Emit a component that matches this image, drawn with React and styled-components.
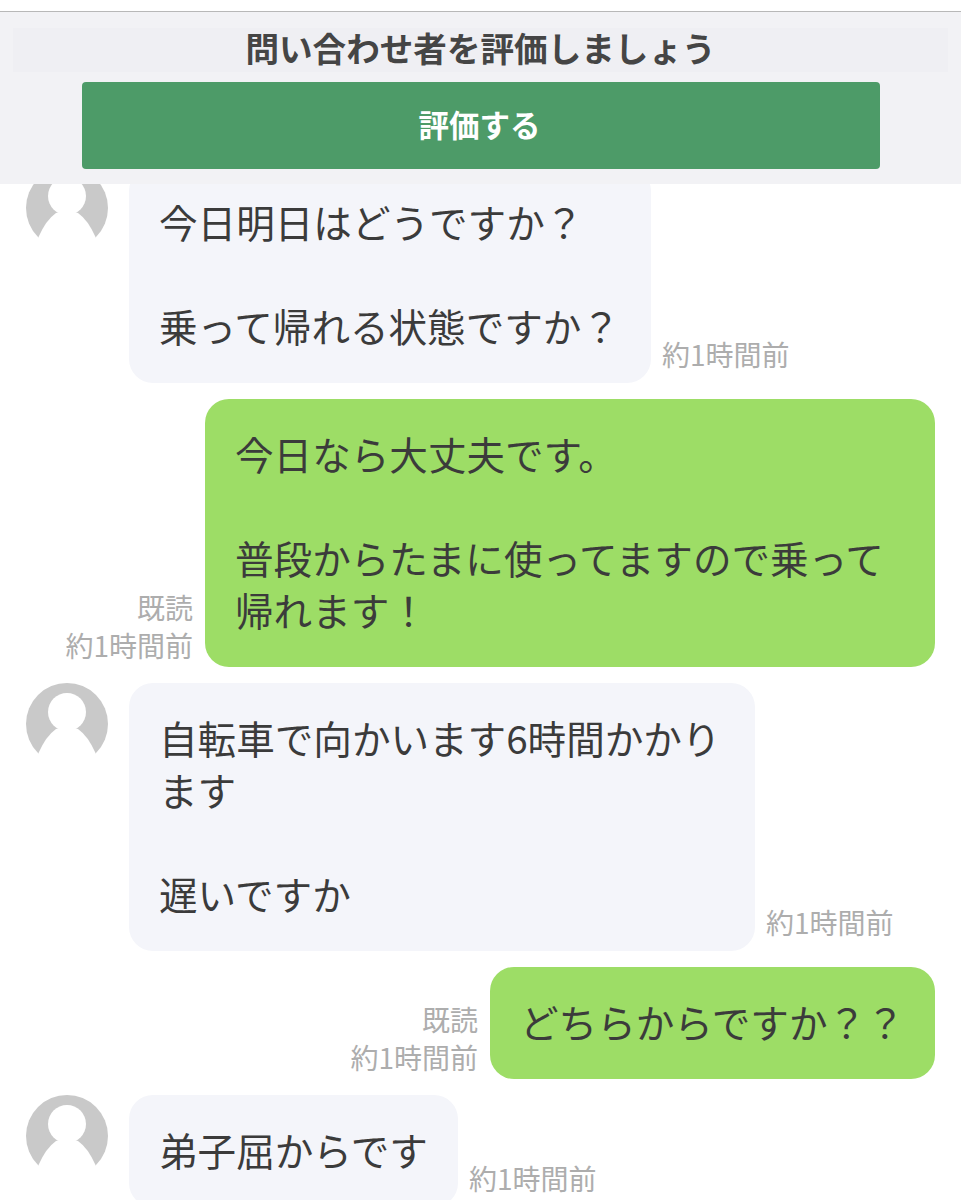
import styled, { createGlobalStyle } from "styled-components";

const GlobalStyle = createGlobalStyle`
  html, body {
    margin: 0;
    padding: 0;
    background: #fff;
  }
  body {
    font-family: "Noto Sans CJK JP", "Noto Sans", sans-serif;
  }
`;

const Page = styled.div`
  width: 961px;
  height: 1200px;
  overflow: hidden;
  padding-top: 11px;
  box-sizing: border-box;
`;

const Header = styled.header`
  position: relative;
  z-index: 1;
  height: 173px;
  box-sizing: border-box;
  border-top: 1px solid #b8b8b8;
  background: #f2f2f5;
  padding: 16px 13px 0;
`;

const Title = styled.h1`
  margin: 0;
  height: 44px;
  line-height: 40px;
  background: #efeff3;
  text-align: center;
  font-size: 33.6px;
  font-weight: 700;
  color: #454545;
`;

const RateButton = styled.button`
  display: block;
  width: 798px;
  height: 87px;
  margin: 10px auto 0;
  padding: 0 2px 4px 0;
  border: 0;
  border-radius: 4px;
  background: #4d9b68;
  color: #fff;
  font-family: inherit;
  font-size: 30.5px;
  font-weight: 700;
`;

const Thread = styled.main`
  display: flex;
  flex-direction: column;
  gap: 16px;
  margin-top: -17px;
  padding: 0 26px;
`;

const Row = styled.div`
  display: flex;
  align-items: flex-end;
  justify-content: ${(props) => (props.$mine ? "flex-end" : "flex-start")};
`;

const Avatar = styled.svg`
  flex: none;
  align-self: flex-start;
  width: 82px;
  height: 82px;
  margin-right: 21px;
`;

const Bubble = styled.div`
  flex: none;
  box-sizing: border-box;
  width: ${(props) => props.$width}px;
  padding: 28px 20px 32px 30px;
  border-radius: 24px;
  background: ${(props) => (props.$mine ? "#9ddd66" : "#f4f5fa")};
  color: #3b3b3b;
  font-size: 38.6px;
  line-height: 52px;
  white-space: pre-line;
`;

const Meta = styled.div`
  flex: none;
  margin: ${(props) => (props.$mine ? "0 12px 3px 0" : "0 0 10px 11px")};
  text-align: right;
  color: #adadad;
  font-size: 28px;
  line-height: 38px;
`;

const messages = [
  {
    width: 522,
    text: "今日明日はどうですか？\n\n乗って帰れる状態ですか？",
  },
  {
    mine: true,
    width: 730,
    text: "今日なら大丈夫です。\n\n普段からたまに使ってますので乗って\n帰れます！",
  },
  {
    width: 626,
    text: "自転車で向かいます6時間かかり\nます\n\n遅いですか",
  },
  {
    mine: true,
    width: 445,
    text: "どちらからですか？？",
  },
  {
    width: 329,
    text: "弟子屈からです",
  },
];

const UserIcon = () => (
  <Avatar viewBox="0 0 82 82">
    <circle cx="41" cy="41" r="41" fill="#c9c9c9" />
    <circle cx="41" cy="29" r="19" fill="#fff" />
    <path
      d="M12.5 70 Q20 53 30 46 Q41 42 52 46 Q62 53 69.5 70 L69.5 82 L12.5 82 Z"
      fill="#fff"
    />
  </Avatar>
);

const App = () => {
  return (
    <>
      <GlobalStyle />
      <Page>
        <Header>
          <Title>問い合わせ者を評価しましょう</Title>
          <RateButton>評価する</RateButton>
        </Header>
        <Thread>
          {messages.map((message) =>
            message.mine ? (
              <Row $mine key={message.text}>
                <Meta $mine>
                  既読
                  <br />
                  約1時間前
                </Meta>
                <Bubble $mine $width={message.width}>
                  {message.text}
                </Bubble>
              </Row>
            ) : (
              <Row key={message.text}>
                <UserIcon />
                <Bubble $width={message.width}>{message.text}</Bubble>
                <Meta>約1時間前</Meta>
              </Row>
            )
          )}
        </Thread>
      </Page>
    </>
  );
};

export default App;
